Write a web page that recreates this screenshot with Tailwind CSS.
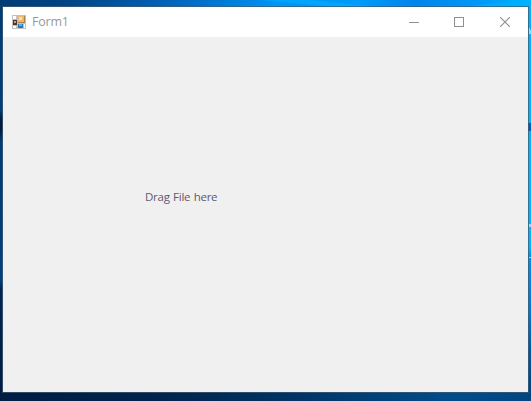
<!DOCTYPE html>
<html lang="en">
<head>
<meta charset="utf-8">
<title>Form1</title>
<script src="https://cdn.jsdelivr.net/npm/@tailwindcss/browser@4"></script>
</head>
<body class="relative h-[401px] w-[531px] overflow-hidden font-['Open_Sans','Noto_Sans',sans-serif]">
  <!-- Desktop wallpaper -->
  <svg class="absolute inset-0" width="531" height="401" viewBox="0 0 531 401" aria-hidden="true">
    <defs>
      <linearGradient id="top"><stop offset="0" stop-color="#003b74"/><stop offset=".12" stop-color="#004483"/><stop offset=".25" stop-color="#0057a5"/><stop offset=".38" stop-color="#0070cc"/><stop offset=".52" stop-color="#0094f3"/><stop offset=".68" stop-color="#009bfb"/><stop offset=".78" stop-color="#0083ed"/><stop offset=".9" stop-color="#0098f8"/><stop offset="1" stop-color="#00b4ff"/></linearGradient>
      <linearGradient id="bottom"><stop offset="0" stop-color="#001d42"/><stop offset=".3" stop-color="#00244c"/><stop offset=".55" stop-color="#003464"/><stop offset=".85" stop-color="#004c8b"/><stop offset="1" stop-color="#004782"/></linearGradient>
      <linearGradient id="left" x2="0" y2="1"><stop offset="0" stop-color="#003d77"/><stop offset=".27" stop-color="#003f79"/><stop offset=".29" stop-color="#001b42"/><stop offset=".32" stop-color="#001b42"/><stop offset=".35" stop-color="#003c75"/><stop offset=".71" stop-color="#00407e"/><stop offset=".73" stop-color="#002552"/><stop offset="1" stop-color="#001c40"/></linearGradient>
      <linearGradient id="right" x2="0" y2="1"><stop offset="0" stop-color="#00b1ff"/><stop offset=".63" stop-color="#00b5ff"/><stop offset=".65" stop-color="#0092ee"/><stop offset=".8" stop-color="#0076d0"/><stop offset=".9" stop-color="#0055a0"/><stop offset="1" stop-color="#004580"/></linearGradient>
    </defs>
    <rect width="531" height="8" fill="url(#top)"/>
    <path d="M260 0h50l70 7h-45zM470 6l50-6h11v7z" fill="#00b2ff" opacity=".55"/>
    <rect y="391" width="531" height="10" fill="url(#bottom)"/>
    <rect y="6" width="3" height="387" fill="url(#left)"/>
    <rect x="528" width="3" height="393" fill="url(#right)"/>
    <path d="M529 28h1v2h1v4h-2zM529 224h2v3h-2z" fill="#b4cdef"/>
    <path d="M528 123h3v8h-3z" fill="#0759b3"/>
    <path d="M529 257h2v1h-2z" fill="#7bd8ff"/>
  </svg>
  <main class="relative flex h-full w-full pt-[6px] pr-[2px] pb-[8px] pl-[2px]">
    <section class="flex flex-1 flex-col border border-[#405b73]/75 bg-[#f0f0f0] bg-clip-padding">
      <header class="flex h-[30px] shrink-0 items-center bg-white pl-[9px]">
        <svg width="14" height="14" viewBox="0 0 14 14" shape-rendering="crispEdges" class="shrink-0" aria-hidden="true">
          <path d="M0 0h14v14H0z" fill="#bfc2c5"/>
          <path d="M1 1h3v3H1zM1 11h3v2H1zM12 9h1v4h-1z" fill="#fff"/>
          <path d="M6 1h7v7H6z" fill="#a9834f"/><path d="M6 1h6v6H6z" fill="#e8b877"/><path d="M7 2h3v3H7z" fill="#ffdfaa"/>
          <path d="M1 5h4v5H1z" fill="#4b3438"/><path d="M2 6h2v2H2z" fill="#d79b66"/>
          <path d="M6 9h5v4H6z" fill="#2478b4"/><path d="M7 9h3v2H7z" fill="#65b0e0"/>
        </svg>
        <h1 class="ml-[6px] flex-1 text-[12.5px] leading-[16px] tracking-[-0.2px] text-[#999]">Form1</h1>
        <div class="flex h-full text-[#909090]">
          <button class="flex w-[45px] items-center justify-center pl-[2px]" aria-label="Minimize"><svg width="11" height="11" viewBox="0 0 11 11" shape-rendering="crispEdges"><path d="M0 5h10v1H0z" fill="currentColor"/></svg></button>
          <button class="flex w-[46px] items-center justify-center" aria-label="Maximize"><svg width="10" height="10" viewBox="0 0 10 10" shape-rendering="crispEdges"><path d="M.5.5h9v9h-9z" fill="none" stroke="currentColor"/></svg></button>
          <button class="flex w-[46px] items-center justify-center" aria-label="Close"><svg width="10" height="10" viewBox="0 0 10 10"><path d="M0 0l10 10M10 0L0 10" fill="none" stroke="currentColor" stroke-width="1.15"/></svg></button>
        </div>
      </header>
      <div class="flex-1 pt-[152px] pl-[142px]">
        <p class="w-max text-[11.5px] leading-[16px] tracking-[-0.26px] [word-spacing:0.7px] text-[#5f5970]">Drag File here</p>
      </div>
    </section>
  </main>
</body>
</html>
